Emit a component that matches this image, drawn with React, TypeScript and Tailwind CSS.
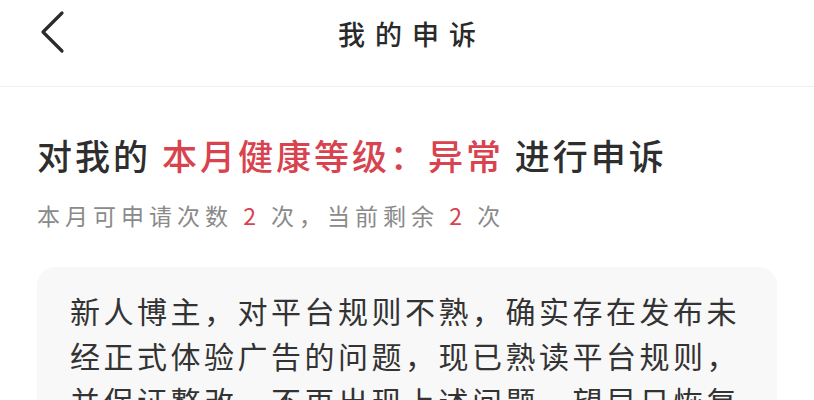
const cjk = { fontFamily: '"Noto Sans CJK SC", "Noto Sans", sans-serif' };

export default function App() {
  const lines = [
    '新人博主，对平台规则不熟，确实存在发布未',
    '经正式体验广告的问题，现已熟读平台规则，',
    '并保证整改，不再出现上述问题，望早日恢复',
  ];

  return (
    <div className="w-[814px] h-[400px] overflow-hidden bg-white" style={cjk}>
      {/* Header */}
      <div className="relative h-[87px] border-b border-[#efefef] flex items-center justify-center">
        <button className="absolute left-[40px] top-[10px] text-[#2b2b2b]">
          <svg width="26" height="44" viewBox="0 0 26 44" fill="none">
            <polyline
              points="22,3 3,22 22,41"
              stroke="currentColor"
              strokeWidth="3.2"
              strokeLinecap="round"
              strokeLinejoin="round"
            />
          </svg>
        </button>
        <h1 className="text-[27px] font-medium text-[#2a2a2a] tracking-[10px] pl-[10px] -mt-[19px] leading-none">我的申诉</h1>
      </div>

      <div className="px-[37px]">
        {/* Title */}
        <div className="mt-[44px] text-[35px] leading-[48px] font-medium text-[#2e2e2e] tracking-[3px] whitespace-nowrap">
          对我的 <span className="text-[#d8434f]">本月健康等级：异常</span> 进行申诉
        </div>

        {/* Subtitle */}
        <div className="mt-[21px] text-[23px] leading-[30px] text-[#8a8a8a] tracking-[5px] whitespace-nowrap">
          本月可申请次数 <span className="text-[#d8434f]">2</span> 次，当前剩余 <span className="text-[#d8434f]">2</span> 次
        </div>

        {/* Reason card */}
        <div className="mt-[37px] rounded-[18px] bg-[#f8f8f8] pl-[33px] pr-[24px] pt-[21px] pb-[20px]">
          {lines.map((line) => (
            <p key={line} className="text-[30px] leading-[45px] text-[#333333] tracking-[3.5px] whitespace-nowrap">
              {line}
            </p>
          ))}
        </div>
      </div>
    </div>
  );
}
